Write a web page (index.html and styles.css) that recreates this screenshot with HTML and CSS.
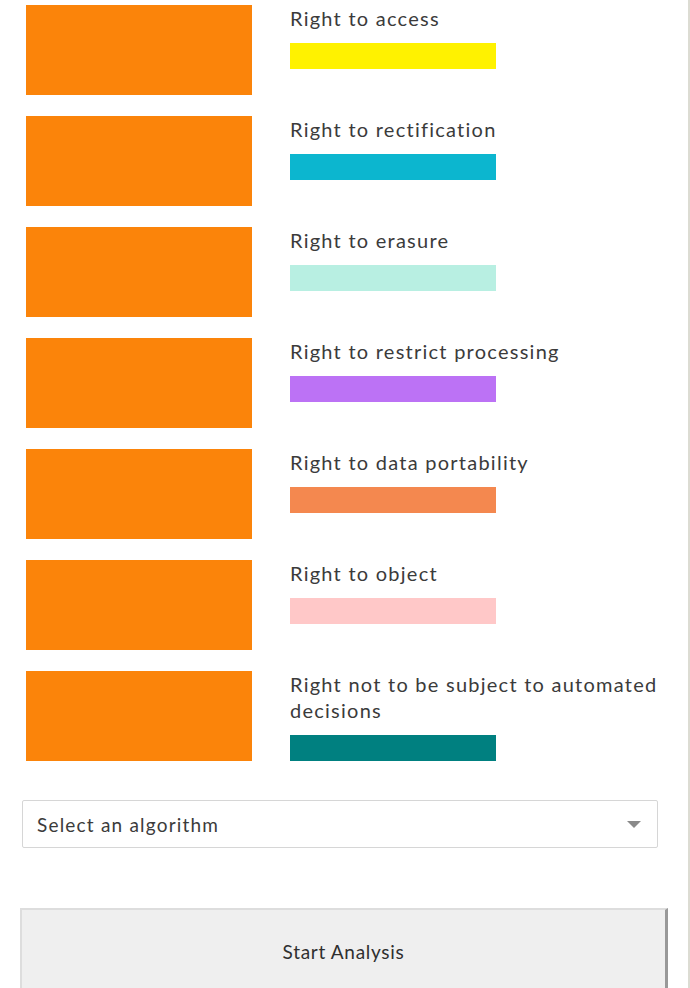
FILE: index.html
```html
<!DOCTYPE html>
<html lang="en">
<head>
<meta charset="utf-8">
<title>Rights analysis</title>
<link rel="stylesheet" href="styles.css">
</head>
<body>
<div class="page">
  <ul class="rights">
    <li class="right">
      <div class="swatch"></div>
      <div class="info">
        <div class="label">Right to access</div>
        <div class="bar bar-access"></div>
      </div>
    </li>
    <li class="right">
      <div class="swatch"></div>
      <div class="info">
        <div class="label">Right to rectification</div>
        <div class="bar bar-rectification"></div>
      </div>
    </li>
    <li class="right">
      <div class="swatch"></div>
      <div class="info">
        <div class="label">Right to erasure</div>
        <div class="bar bar-erasure"></div>
      </div>
    </li>
    <li class="right">
      <div class="swatch"></div>
      <div class="info">
        <div class="label">Right to restrict processing</div>
        <div class="bar bar-restrict"></div>
      </div>
    </li>
    <li class="right">
      <div class="swatch"></div>
      <div class="info">
        <div class="label">Right to data portability</div>
        <div class="bar bar-portability"></div>
      </div>
    </li>
    <li class="right">
      <div class="swatch"></div>
      <div class="info">
        <div class="label">Right to object</div>
        <div class="bar bar-object"></div>
      </div>
    </li>
    <li class="right">
      <div class="swatch"></div>
      <div class="info">
        <div class="label">Right not to be subject to automated decisions</div>
        <div class="bar bar-automated"></div>
      </div>
    </li>
  </ul>

  <div class="select">
    <span class="select-text">Select an algorithm</span>
    <span class="select-arrow"></span>
  </div>

  <button class="start" type="button">Start Analysis</button>
</div>
</body>
</html>
```

FILE: styles.css
```css
html, body {
  margin: 0;
  padding: 0;
  background: #ffffff;
  height: 100%;
  overflow: hidden;
}

body {
  font-family: Lato, "DejaVu Sans", sans-serif;
  color: #3b3b3b;
  border-right: 2px solid #dcdcd3;
  box-sizing: border-box;
}

.page {
  padding: 5px 0 0 0;
}

.rights {
  list-style: none;
  margin: 0;
  padding: 0 0 0 26px;
  display: flex;
  flex-direction: column;
  gap: 21px;
}

.right {
  display: flex;
  align-items: flex-start;
}

.swatch {
  flex: none;
  width: 226px;
  height: 90px;
  background: #fb840a;
}

.info {
  margin-left: 38px;
  padding-top: 0;
  width: 390px;
}

.label {
  font-size: 20px;
  line-height: 26px;
  letter-spacing: 1.25px;
}

.bar {
  width: 206px;
  height: 26px;
  margin-top: 12px;
}

.bar-access { background: #fff200; }
.bar-rectification { background: #0cb6cf; }
.bar-erasure { background: #b8efe2; }
.bar-restrict { background: #bc72f5; }
.bar-portability { background: #f4884f; }
.bar-object { background: #ffc8c8; }
.bar-automated { background: #008080; }

.select {
  margin: 39px 0 0 22px;
  width: 636px;
  height: 48px;
  box-sizing: border-box;
  border: 1px solid #d6d6d6;
  border-radius: 2px;
  display: flex;
  align-items: center;
  justify-content: space-between;
  padding: 0 16px 0 14px;
  font-size: 19px;
  letter-spacing: 1.2px;
}

.select-arrow {
  width: 0;
  height: 0;
  border-left: 7px solid transparent;
  border-right: 7px solid transparent;
  border-top: 7px solid #8a8a8a;
}

.start {
  display: flex;
  align-items: center;
  justify-content: center;
  margin: 60px 0 0 20px;
  width: 648px;
  height: 90px;
  box-sizing: border-box;
  background: #efefef;
  border-top: 2px solid #dddddd;
  border-left: 2px solid #dddddd;
  border-right: 3px solid #999999;
  border-bottom: none;
  padding: 0 0 5px 0;
  font-family: Lato, "DejaVu Sans", sans-serif;
  font-size: 19px;
  letter-spacing: 0.7px;
  color: #2f2f2f;
}
```
